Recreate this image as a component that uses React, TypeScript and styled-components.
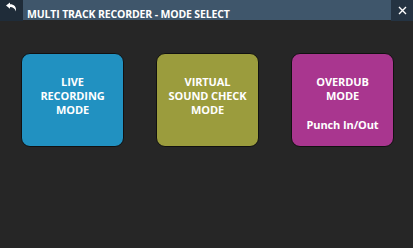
import React from "react";
import styled, { createGlobalStyle } from "styled-components";

const Global = createGlobalStyle`
  html, body { margin: 0; padding: 0; background: #262626; }
  body { width: 413px; height: 248px; overflow: hidden; font-family: "Open Sans", "Noto Sans", sans-serif; }
`;

const Screen = styled.div`
  width: 413px;
  height: 248px;
  background: #262626;
  display: flex;
  flex-direction: column;
`;

const Header = styled.div`
  display: flex;
  height: 21px;
`;

const BackCell = styled.div`
  width: 23px;
  background: #1f2c39;
  display: flex;
  justify-content: center;
  align-items: flex-start;
  padding-top: 2px;
  box-sizing: border-box;
`;

const TitleBar = styled.div`
  flex: 1;
  height: 20px;
  background: #3f566b;
  padding: 9px 0 0 4px;
  box-sizing: border-box;
  color: #ffffff;
  font-weight: 700;
  font-size: 10.5px;
  line-height: 10.5px;
  letter-spacing: -0.15px;
  white-space: nowrap;
`;

const CloseCell = styled.div`
  width: 22px;
  background: #243342;
  display: flex;
  justify-content: center;
  align-items: center;
`;

const Body = styled.div`
  display: flex;
  gap: 32px;
  padding: 32px 0 0 21px;
`;

const ModeButton = styled.button<{ $bg: string }>`
  width: 103px;
  height: 94px;
  box-sizing: border-box;
  border: 1px solid #111111;
  border-radius: 9px;
  background: ${(p) => p.$bg};
  color: #ffffff;
  font-family: "Open Sans", "Noto Sans", sans-serif;
  font-weight: 700;
  font-size: 11px;
  line-height: 14px;
  letter-spacing: -0.1px;
  display: flex;
  flex-direction: column;
  align-items: center;
  justify-content: flex-start;
  padding: 21px 2px 0;
  text-align: center;
  cursor: pointer;
`;

const Line = styled.span<{ $gap?: boolean }>`
  display: block;
  white-space: nowrap;
  margin-top: ${(p) => (p.$gap ? "15px" : "0")};
`;

const BackIcon = () => (
  <svg width="14" height="10" viewBox="0 0 14 10">
    <path d="M1 3.5 L5 0.5 L5 2.2 C9 2.2 11.5 4.5 11 9.5 C10 6.5 8 5 5 5 L5 6.8 Z" fill="#ffffff" />
  </svg>
);

const CloseIcon = () => (
  <svg width="9" height="9" viewBox="0 0 9 9">
    <path d="M1 1 L8 8 M8 1 L1 8" stroke="#ffffff" strokeWidth="1.4" />
  </svg>
);

export default function App() {
  return (
    <Screen>
      <Global />
      <Header>
        <BackCell>
          <BackIcon />
        </BackCell>
        <TitleBar>MULTI TRACK RECORDER - MODE SELECT</TitleBar>
        <CloseCell>
          <CloseIcon />
        </CloseCell>
      </Header>
      <Body>
        <ModeButton $bg="#2191c1">
          <Line>LIVE</Line>
          <Line>RECORDING</Line>
          <Line>MODE</Line>
        </ModeButton>
        <ModeButton $bg="#9b9c3d">
          <Line>VIRTUAL</Line>
          <Line>SOUND CHECK</Line>
          <Line>MODE</Line>
        </ModeButton>
        <ModeButton $bg="#a9368f">
          <Line>OVERDUB</Line>
          <Line>MODE</Line>
          <Line $gap>Punch In/Out</Line>
        </ModeButton>
      </Body>
    </Screen>
  );
}
